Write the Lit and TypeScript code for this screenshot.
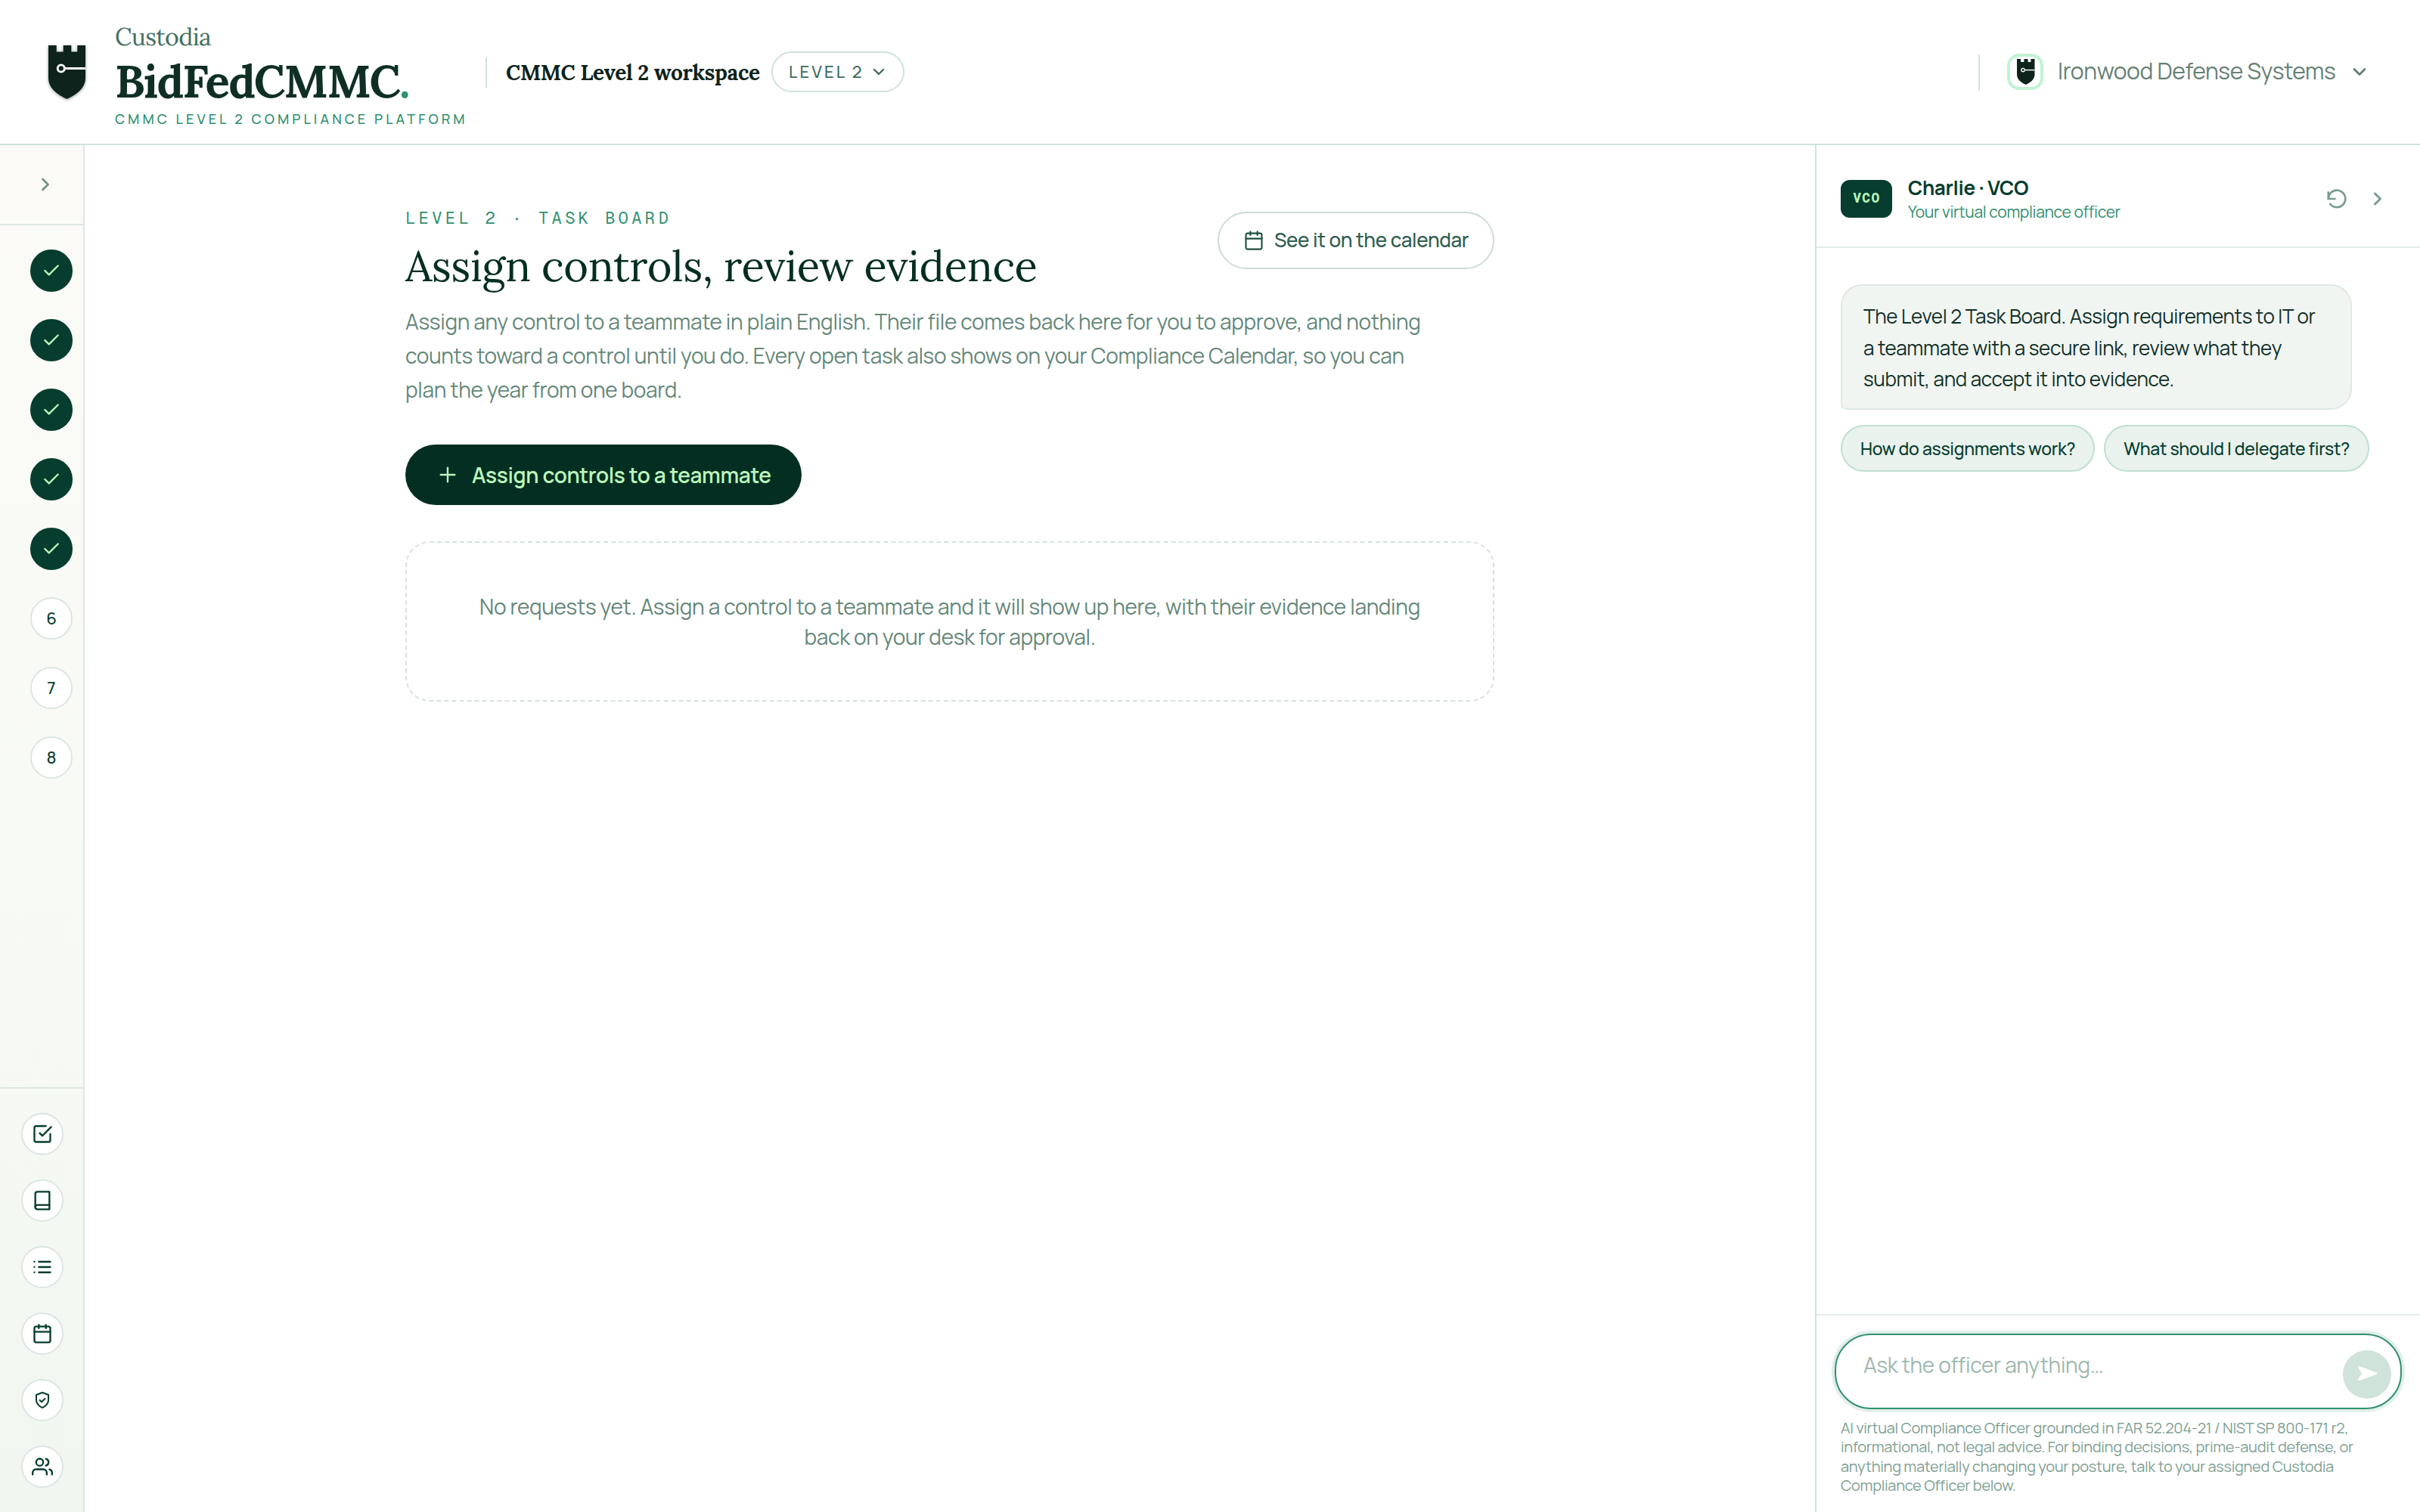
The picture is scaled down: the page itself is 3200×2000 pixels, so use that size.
import { LitElement, html, css, svg } from "lit";
import { customElement, property } from "lit/decorators.js";

const ICONS: Record<string, unknown> = {
  check: svg`<path d="M20 6 9 17l-5-5"/>`,
  plus: svg`<path d="M12 5v14M5 12h14"/>`,
  chevronRight: svg`<path d="m9 18 6-6-6-6"/>`,
  chevronDown: svg`<path d="m6 9 6 6 6-6"/>`,
  calendar: svg`<rect x="3" y="4" width="18" height="18" rx="2"/><path d="M16 2v4M8 2v4M3 10h18"/>`,
  checkSquare: svg`<path d="m9 11 3 3L22 4"/><path d="M21 12v7a2 2 0 0 1-2 2H5a2 2 0 0 1-2-2V5a2 2 0 0 1 2-2h11"/>`,
  book: svg`<path d="M4 19.5A2.5 2.5 0 0 1 6.5 17H20"/><path d="M6.5 2H20v20H6.5A2.5 2.5 0 0 1 4 19.5v-15A2.5 2.5 0 0 1 6.5 2z"/>`,
  list: svg`<path d="M8 6h13M8 12h13M8 18h13M3 6h.01M3 12h.01M3 18h.01"/>`,
  shield: svg`<path d="M12 22s8-3.5 8-10V5l-8-3-8 3v7c0 6.5 8 10 8 10z"/><path d="m8.5 12 2.5 2.5 4.5-4.5"/>`,
  users: svg`<path d="M17 21v-2a4 4 0 0 0-4-4H5a4 4 0 0 0-4 4v2"/><circle cx="9" cy="7" r="4"/><path d="M23 21v-2a4 4 0 0 0-3-3.87M16 3.13a4 4 0 0 1 0 7.75"/>`,
  restart: svg`<path d="M3 5v7h7"/><path d="M4.9 17.4A9 9 0 1 0 4.4 7.2L3 12"/>`,
  send: svg`<path fill="currentColor" d="M3.9 4.7 20.9 11 3.9 17.3 8 11z"/>`,
};

@customElement("ui-icon")
export class UiIcon extends LitElement {
  static styles = css`
    :host { display: block; flex: none; }
    svg { display: block; width: 100%; height: 100%; overflow: visible; }
  `;
  @property() name = "check";
  @property({ type: Number }) weight = 2;
  render() {
    return html`<svg viewBox="0 0 24 24" fill="none" stroke="currentColor" stroke-width=${this.weight}
      stroke-linecap="round" stroke-linejoin="round">${ICONS[this.name]}</svg>`;
  }
}

@customElement("castle-mark")
export class CastleMark extends LitElement {
  static styles = css`
    :host { display: block; flex: none; }
    svg { display: block; width: 100%; height: 100%; overflow: visible; }
  `;
  render() {
    return html`<svg viewBox="0 0 49 71">
      <path fill="#0d231b" d="M0 0h10.7v8.5h9V0h10.6v8.5h8V0H49v43.5C49 55.5 38.5 65 24.5 71 10.5 65 0 55.5 0 43.5z"/>
      <circle cx="16.8" cy="30.5" r="4.6" fill="none" stroke="#fff" stroke-width="2.9"/>
      <path d="M22 30.5h27" stroke="#fff" stroke-width="3"/>
    </svg>`;
  }
}

const STEPS = [1, 2, 3, 4, 5, 6, 7, 8];
const DONE = 5;
const TOOLS = ["checkSquare", "book", "list", "calendar", "shield", "users"];
const PROMPTS = ["How do assignments work?", "What should I delegate first?"];

@customElement("app-root")
export class AppRoot extends LitElement {
  static styles = css`
    :host {
      display: flex; flex-direction: column; height: 2000px; background: #fff;
      font-family: Manrope, Inter, sans-serif; font-size: 28px; letter-spacing: -0.32px; color: #052e22;
    }
    * { box-sizing: border-box; }
    h1, p { margin: 0; }
    button { font: inherit; letter-spacing: inherit; margin: 0; padding: 0; background: none; border: 0; color: inherit; text-align: left; white-space: nowrap; }
    .i24 { width: 24px; height: 24px; }
    .i26 { width: 26px; height: 26px; }
    .i28 { width: 28px; height: 28px; }
    .i30 { width: 30px; height: 30px; }
    .i32 { width: 32px; height: 32px; }

    .top { flex: none; height: 192px; border-bottom: 2px solid #cfe2da; display: flex; align-items: center; padding: 0 66px 0 64px; }
    .mark { width: 49px; height: 71px; filter: drop-shadow(0 1px 2px rgba(13, 35, 27, .45)); }
    .brand { width: 464px; margin-left: 39px; padding-top: 8px; white-space: nowrap; }
    .brand-a { font: 400 32px/36px Lora, serif; letter-spacing: -.64px; color: #456f60; padding-top: 1px; }
    .brand-b { font: 700 60px/60px Lora, serif; letter-spacing: -1.5px; color: #0f2f26; margin-top: 10px; }
    .dot { color: #2f9270; }
    .brand-c { font-size: 18px; line-height: 24px; font-weight: 500; letter-spacing: 4.1px; color: #2f8f6f; margin-top: 8px; }
    .rule { width: 2px; height: 40px; background: #cfe2da; margin: 2px 25px 0 26px; }
    .ws { width: 335px; font: 700 28px/40px Lora, serif; letter-spacing: -.32px; color: #0d231b; white-space: nowrap; padding-top: 2px; }
    .pill { width: 176px; height: 54px; margin-left: 16px; border: 2px solid #cfe2da; border-radius: 27px; padding: 0 19px 0 21px; display: flex; align-items: center; gap: 7px; font-size: 22px; font-weight: 500; letter-spacing: 3.15px; color: #3f6a5b; }
    .grow { flex: 1; }
    .rule.r { height: 48px; margin: 2px 36px 0 0; }
    .org { display: flex; align-items: center; gap: 18px; font-size: 30px; line-height: 40px; color: #668075; }
    .org-name { padding-bottom: 2px; margin: 0 -.5px 0 .5px; letter-spacing: -.36px; }
    .org-badge { width: 48px; height: 48px; border: 4px solid #bff3d3; border-radius: 16px; background: #fff; display: grid; place-items: center; }
    .org-badge castle-mark { width: 23.5px; height: 34px; }

    .body { flex: 1; min-height: 0; display: flex; }
    .side { flex: none; width: 112px; border-right: 2px solid #dbe8e3; background: linear-gradient(#fbfaf7, #f8faf5 50%, #f1f6f1); display: flex; flex-direction: column; }
    .toggle { height: 106px; border-bottom: 2px solid #dbe8e3; display: flex; align-items: center; padding-left: 46px; color: #6f9485; }
    .steps { flex: 1; display: flex; flex-direction: column; gap: 36px; padding: 32px 0 0 40px; }
    .disc { width: 56px; height: 56px; border-radius: 50%; border: 2px solid #dbe6e2; background: #fff; display: grid; place-items: center; color: #063d2e; font-size: 22px; font-weight: 500; letter-spacing: 0; line-height: 1; }
    .disc.done { background: #063d2e; border-color: #063d2e; color: #bbf7bb; }
    .tools { border-top: 2px solid #dbe6e2; display: flex; flex-direction: column; gap: 32px; padding: 32px 0 32px 28px; }

    main { flex: 1; display: flex; justify-content: center; padding-top: 80px; }
    .col { width: 1440px; }
    .head { display: flex; justify-content: space-between; align-items: flex-start; }
    .eyebrow { font: 400 22px/32px "Geist Mono", "Liberation Mono", monospace; letter-spacing: 4.4px; color: #2f8f6f; white-space: pre; }
    h1 { font: 400 56px/70px Lora, serif; letter-spacing: -.32px; color: #052e22; margin-top: 12.5px; }
    .cal { width: 366px; height: 76px; margin-top: 8px; border: 2px solid #cfdcd7; border-radius: 38px; padding-left: 32px; display: flex; align-items: center; gap: 13px; font-size: 26px; font-weight: 500; color: #2f5d4e; }
    .cal span { padding-bottom: 3px; }
    .cal ui-icon { color: #1d5140; }
    .lead { font-size: 28px; line-height: 44.8px; color: #648779; max-width: 1360px; margin-top: 16.5px; }
    .cta { height: 80px; margin-top: 50.6px; border-radius: 40px; background: #052e22; color: #bbf7bb; padding: 0 40px; display: inline-flex; align-items: center; gap: 16px; font-weight: 600; vertical-align: top; }
    .empty { height: 212px; margin-top: 48px; border: 2px dashed #d7e2de; border-radius: 32px; padding-top: 64px; }
    .empty p { width: 1270px; margin: 0 auto; text-align: center; line-height: 40px; color: #648779; }

    .panel { flex: none; width: 800px; border-left: 2px solid #cfe2da; display: flex; flex-direction: column; }
    .p-head { height: 136px; border-bottom: 2px solid #e0ece7; display: flex; align-items: center; padding: 8px 42px 0 32px; }
    .vco { width: 68px; height: 50px; border-radius: 12px; background: #063d2e; color: #bbf7bb; display: grid; place-items: center; font: 700 18px/24px "Geist Mono", "Liberation Mono", monospace; letter-spacing: 1.44px; padding: 0 0 2px 1px; }
    .who { margin-left: 21px; flex: 1; padding-bottom: 2px; }
    .name { font-size: 26px; line-height: 36px; font-weight: 700; color: #063d2e; }
    .role { font-size: 21px; line-height: 28px; color: #2f8f6f; }
    .p-act { display: flex; align-items: center; gap: 25px; color: #7a9d90; }
    .feed { flex: 1; padding: 48px 32px 0 32px; }
    .msg { width: 676px; height: 166px; border: 2px solid #dde9e3; border-radius: 28px 28px 28px 8px; background: #f1f5f2; padding: 20.2px 28px 0; font-size: 26px; line-height: 41.6px; color: #0f2f26; }
    .chips { display: flex; gap: 12px; margin-top: 20px; }
    .chip { height: 62px; border: 2px solid #bfdfcf; border-radius: 31px; background: #e9f2ed; padding: 0 24px; font-size: 23px; font-weight: 500; color: #063d2e; }
    .foot { border-top: 2px solid #e0ece7; padding: 24px 24px 23px; }
    .ask { height: 100px; border: 2px solid #2f8f70; border-radius: 48px; box-shadow: 0 0 0 4px #e2eee9; display: flex; justify-content: space-between; align-items: flex-end; padding: 0 12px 12px 36px; color: #9db8ad; }
    .ask span { line-height: 40px; margin-bottom: 25px; }
    .send { width: 64px; height: 64px; border-radius: 50%; background: #cfe3da; color: #fff; display: grid; place-items: center; }
    .note { margin: 12px 8px 0; width: 700px; font-size: 20px; line-height: 25.2px; color: #7f9f92; }
  `;

  render() {
    return html`
      <header class="top">
        <castle-mark class="mark"></castle-mark>
        <div class="brand">
          <div class="brand-a">Custodia</div>
          <div class="brand-b">BidFedCMMC<span class="dot">.</span></div>
          <div class="brand-c">CMMC LEVEL 2 COMPLIANCE PLATFORM</div>
        </div>
        <div class="rule"></div>
        <div class="ws">CMMC Level 2 workspace</div>
        <button class="pill">LEVEL 2<ui-icon class="i24" name="chevronDown" weight="2.4"></ui-icon></button>
        <div class="grow"></div>
        <div class="rule r"></div>
        <button class="org">
          <span class="org-badge"><castle-mark></castle-mark></span>
          <span class="org-name">Ironwood Defense Systems</span>
          <ui-icon class="i28" name="chevronDown" weight="2.4"></ui-icon>
        </button>
      </header>
      <div class="body">
        <nav class="side">
          <div class="toggle"><ui-icon class="i28" name="chevronRight" weight="2.4"></ui-icon></div>
          <div class="steps">
            ${STEPS.map((n) => n <= DONE
              ? html`<div class="disc done"><ui-icon class="i26" name="check" weight="2.2"></ui-icon></div>`
              : html`<div class="disc">${n}</div>`)}
          </div>
          <div class="tools">
            ${TOOLS.map((t) => html`<div class="disc"><ui-icon class=${t === "shield" ? "i24" : "i28"} name=${t}></ui-icon></div>`)}
          </div>
        </nav>
        <main>
          <div class="col">
            <div class="head">
              <div>
                <div class="eyebrow">LEVEL 2 · TASK BOARD</div>
                <h1>Assign controls, review evidence</h1>
              </div>
              <button class="cal"><ui-icon class="i28" name="calendar" weight="1.8"></ui-icon><span>See it on the calendar</span></button>
            </div>
            <p class="lead">Assign any control to a teammate in plain English. Their file comes back here for you to approve, and nothing counts toward a control until you do. Every open task also shows on your Compliance Calendar, so you can plan the year from one board.</p>
            <button class="cta"><ui-icon class="i32" name="plus" weight="1.8"></ui-icon>Assign controls to a teammate</button>
            <div class="empty"><p>No requests yet. Assign a control to a teammate and it will show up here, with their evidence landing back on your desk for approval.</p></div>
          </div>
        </main>
        <aside class="panel">
          <div class="p-head">
            <div class="vco">VCO</div>
            <div class="who">
              <div class="name">Charlie · VCO</div>
              <div class="role">Your virtual compliance officer</div>
            </div>
            <div class="p-act">
              <ui-icon class="i30" name="restart" weight="2.1"></ui-icon>
              <ui-icon class="i28" name="chevronRight" weight="2.6"></ui-icon>
            </div>
          </div>
          <div class="feed">
            <div class="msg">The Level 2 Task Board. Assign requirements to IT or a teammate with a secure link, review what they submit, and accept it into evidence.</div>
            <div class="chips">${PROMPTS.map((p) => html`<button class="chip">${p}</button>`)}</div>
          </div>
          <div class="foot">
            <div class="ask">
              <span>Ask the officer anything…</span>
              <div class="send"><ui-icon class="i32" name="send"></ui-icon></div>
            </div>
            <p class="note">AI virtual Compliance Officer grounded in FAR 52.204-21 / NIST SP 800-171 r2, informational, not legal advice. For binding decisions, prime-audit defense, or anything materially changing your posture, talk to your assigned Custodia Compliance Officer below.</p>
          </div>
        </aside>
      </div>
    `;
  }
}
